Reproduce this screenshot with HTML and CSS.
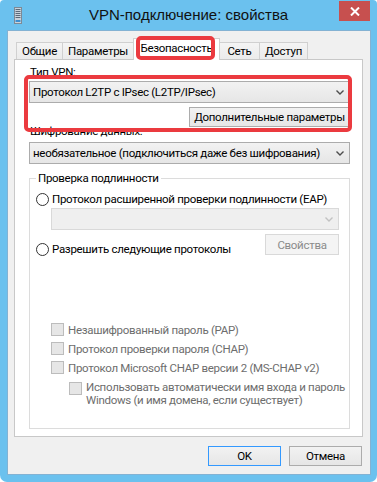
FILE: index.html
```html
<!DOCTYPE html>
<html lang="ru">
<head>
<meta charset="utf-8">
<title>VPN-подключение: свойства</title>
<link rel="stylesheet" href="styles.css">
</head>
<body>
<div class="window">
  <div class="titlebar">
    <div class="tb-left">
      <svg class="app-icon" width="8" height="17" viewBox="0 0 8 17">
        <rect x="0.5" y="0.5" width="7" height="16" fill="#c9d3dc" stroke="#7d8a96"/>
        <rect x="1.5" y="2" width="5" height="1" fill="#5c6a78"/>
        <rect x="1.5" y="4" width="5" height="1" fill="#5c6a78"/>
        <rect x="1.5" y="6" width="5" height="1" fill="#5c6a78"/>
        <rect x="1.5" y="8" width="5" height="1" fill="#5c6a78"/>
        <rect x="1.5" y="10" width="5" height="1" fill="#5c6a78"/>
        <rect x="1.5" y="13" width="5" height="2" fill="#3c8fd0"/>
      </svg>
    </div>
    <div class="title">VPN-подключение: свойства</div>
    <div class="tb-right">
      <div class="close">
        <svg width="10" height="9" viewBox="0 0 10 9"><path d="M1 0.5 L9 8.5 M9 0.5 L1 8.5" stroke="#ffffff" stroke-width="2"/></svg>
      </div>
    </div>
  </div>
  <div class="client">
    <div class="tabs">
      <div class="tab w1">Общие</div>
      <div class="tab w2">Параметры</div>
      <div class="tab w3 selected">Безопасность</div>
      <div class="tab w4">Сеть</div>
      <div class="tab w5">Доступ</div>
    </div>
    <div class="panel">
      <div class="label first">Тип VPN:</div>
      <div class="combo">
        <span>Протокол L2TP с IPsec (L2TP/IPsec)</span>
        <svg class="chev" width="8" height="5" viewBox="0 0 8 5"><path d="M0.5 0.5 L4 4 L7.5 0.5" fill="none" stroke="#4d4d4d" stroke-width="1.4"/></svg>
      </div>
      <div class="btn-row">
        <div class="btn adv">Дополнительные параметры</div>
      </div>
      <div class="label second">Шифрование данных:</div>
      <div class="combo enc">
        <span>необязательное (подключиться даже без шифрования)</span>
        <svg class="chev" width="8" height="5" viewBox="0 0 8 5"><path d="M0.5 0.5 L4 4 L7.5 0.5" fill="none" stroke="#4d4d4d" stroke-width="1.4"/></svg>
      </div>
      <fieldset class="group">
        <legend>Проверка подлинности</legend>
        <div class="radio-row r1">
          <span class="radio"></span>
          <span>Протокол расширенной проверки подлинности (EAP)</span>
        </div>
        <div class="combo disabled">
          <span></span>
          <svg class="chev" width="8" height="5" viewBox="0 0 8 5"><path d="M0.5 0.5 L4 4 L7.5 0.5" fill="none" stroke="#c2c2c2" stroke-width="1.4"/></svg>
        </div>
        <div class="proto-row">
          <div class="radio-row r2">
            <span class="radio"></span>
            <span>Разрешить следующие протоколы</span>
          </div>
          <div class="btn props">Свойства</div>
        </div>
        <div class="check-row c1"><span class="check"></span><span>Незашифрованный пароль (PAP)</span></div>
        <div class="check-row"><span class="check"></span><span>Протокол проверки пароля (CHAP)</span></div>
        <div class="check-row"><span class="check"></span><span>Протокол Microsoft CHAP версии 2 (MS-CHAP v2)</span></div>
        <div class="check-row sub"><span class="check"></span><span class="multi">Использовать автоматически имя входа и пароль<br>Windows (и имя домена, если существует)</span></div>
      </fieldset>
    </div>
    <div class="footer">
      <div class="btn dlg default">OK</div>
      <div class="btn dlg">Отмена</div>
    </div>
  </div>
  <div class="mark mark-tab"></div>
  <div class="mark mark-vpn"></div>
</div>
</body>
</html>
```
FILE: styles.css
```css
* { box-sizing: border-box; }
html, body { margin: 0; padding: 0; background: #ffffff; }
body {
  font-family: Roboto, "Liberation Sans", Arial, sans-serif;
  font-size: 11.5px;
  letter-spacing: -0.3px;
  color: #000000;
}
.window {
  position: relative;
  width: 377px;
  height: 482px;
  background: #6bc1ee;
  border-radius: 4px 4px 7px 7px;
  display: flex;
  flex-direction: column;
}
.titlebar {
  height: 30px;
  display: grid;
  grid-template-columns: 1fr auto 1fr;
}
.tb-left { display: flex; align-items: flex-start; padding: 7px 0 0 14px; }
.app-icon { display: block; }
.title {
  font-family: "Liberation Sans", Arial, sans-serif;
  font-size: 15px;
  letter-spacing: 0;
  line-height: 30px;
  color: #111111;
  padding-bottom: 1px;
}
.tb-right { display: flex; justify-content: flex-end; padding-right: 7px; }
.close {
  width: 31px;
  height: 20px;
  margin-top: 1px;
  background: #c7504f;
  display: flex;
  align-items: center;
  justify-content: center;
}
.close svg { display: block; }
.client {
  flex: 1;
  margin: 0 6px 7px 7px;
  border: 1px solid #83b2d3;
  background: #f0f0f0;
  padding: 7px 7px 0 6px;
  display: flex;
  flex-direction: column;
}
.tabs {
  height: 21px;
  display: flex;
  align-items: flex-end;
  padding-left: 2px;
}
.tab {
  height: 17px;
  border: 1px solid #d0d0d0;
  border-bottom: none;
  background: linear-gradient(#f4f4f4, #ebebeb);
  margin-right: -1px;
  display: flex;
  align-items: center;
  justify-content: center;
  line-height: 14px;
  white-space: nowrap;
}
.tab.selected {
  position: relative;
  z-index: 2;
  height: 22px;
  margin-bottom: -1px;
  background: #ffffff;
  padding-bottom: 4px;
}
.w1 { width: 47px; }
.w2 { width: 72px; }
.w3 { width: 87px; }
.w4 { width: 41px; }
.w5 { width: 49px; }
.panel {
  height: 378px;
  width: 349px;
  background: #ffffff;
  border: 1px solid #c8c8c8;
  padding: 4px 12px 0 14px;
  display: flex;
  flex-direction: column;
}
.label { line-height: 16px; white-space: nowrap; }
.label.first { height: 16px; padding-left: 1px; }
.label.second { height: 14px; line-height: 14px; margin-top: -3px; padding-left: 1px; }
.combo {
  height: 22px;
  border: 1px solid #acacac;
  background: linear-gradient(#f2f2f2, #e6e6e6);
  display: flex;
  align-items: center;
  justify-content: space-between;
  padding: 0 5px 0 3px;
  margin-top: 1px;
  white-space: nowrap;
}
.combo.enc { margin-top: 4px; }
.chev { display: block; flex: none; }
.combo.disabled {
  width: 288px;
  margin-left: 15px;
  border-color: #d9d9d9;
  background: #efefef;
}
.btn-row { display: flex; justify-content: flex-end; margin-top: 4px; }
.btn {
  height: 21px;
  border: 1px solid #acacac;
  background: linear-gradient(#f2f2f2, #e6e6e6);
  display: flex;
  align-items: center;
  justify-content: center;
  white-space: nowrap;
}
.btn.adv { width: 161px; height: 20px; }
.group {
  margin: 6px 0 0 0;
  padding: 0 10px 0 6px;
  border: 1px solid #dcdcdc;
  width: 321px;
  min-width: 0;
  height: 259px;
  display: flex;
  flex-direction: column;
}
.group legend {
  padding: 0 2px;
  line-height: 16px;
  height: 16px;
}
.radio-row { display: flex; align-items: center; line-height: 16px; gap: 3px; white-space: nowrap; }
.radio-row.r1 { margin-top: 5px; }
.radio {
  width: 13px;
  height: 13px;
  border: 1px solid #333333;
  border-radius: 50%;
  background: #ffffff;
  flex: none;
}
.proto-row {
  display: flex;
  justify-content: space-between;
  align-items: flex-start;
  margin-top: 4px;
}
.radio-row.r2 { margin-top: 7px; }
.btn.props {
  width: 74px;
  border-color: #d9d9d9;
  background: #f4f4f4;
  color: #8b8b8b;
}
.check-row {
  display: flex;
  align-items: center;
  gap: 4px;
  height: 19px;
  margin-left: 15px;
  color: #6d6d6d;
  white-space: nowrap;
}
.check-row.c1 { margin-top: 63px; }
.check {
  width: 13px;
  height: 13px;
  border: 1px solid #bcbcbc;
  background: #e6e6e6;
  flex: none;
}
.check-row.sub {
  margin-left: 33px;
  margin-top: 5px;
  height: auto;
  align-items: flex-start;
}
.multi { line-height: 13px; margin-top: -1px; }
.footer {
  display: flex;
  justify-content: flex-end;
  gap: 8px;
  margin-top: 9px;
  margin-right: 1px;
}
.btn.dlg { width: 73px; height: 20px; }
.btn.default { border-color: #3399ff; }
.mark {
  position: absolute;
  border: 4px solid #eb3a3f;
  border-radius: 5px;
  z-index: 5;
}
.mark-tab { left: 136px; top: 36px; width: 79px; height: 24px; }
.mark-vpn { left: 24px; top: 75px; width: 328px; height: 57px; }
```
